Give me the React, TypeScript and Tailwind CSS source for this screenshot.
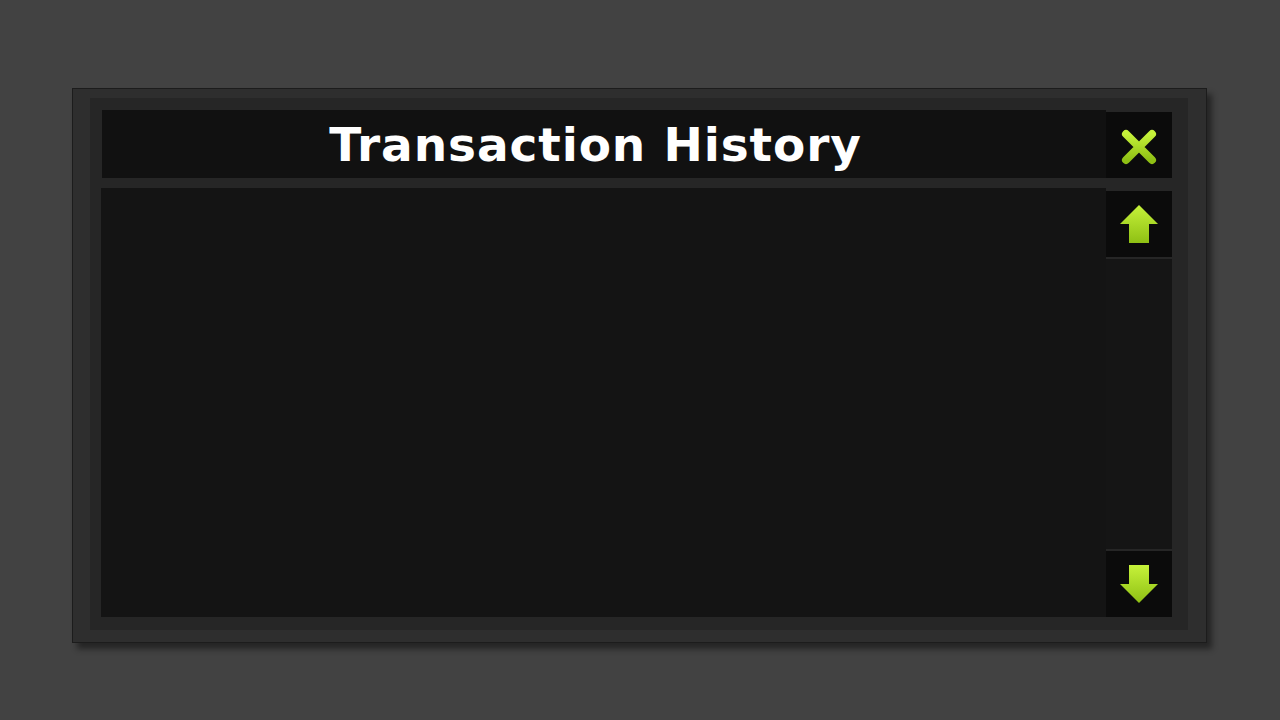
import React from "react";

const G = ({ id }: { id: string }) => (
  <defs>
    <linearGradient id={id} x1="0" y1="0" x2="0" y2="1">
      <stop offset="0" stopColor="#c6f23a" />
      <stop offset="1" stopColor="#8fc014" />
    </linearGradient>
  </defs>
);

export default function App() {
  return (
    <div className="w-[1280px] h-[720px] bg-[#424242] pt-[88px] pl-[72px] overflow-hidden" style={{ fontFamily: '"DejaVu Sans", Verdana, sans-serif' }}>
      <div className="w-[1135px] h-[555px] bg-[#2e2e2e] border border-[#1c1c1c] shadow-[5px_6px_6px_rgba(0,0,0,0.45)] pt-[9px] pl-[17px] pr-[18px] pb-[12px] flex">
        <div className="flex-1 bg-[#262626] pt-[12px] pl-[11px] pr-[16px] pb-[13px] flex">
          <div className="flex-1 flex flex-col">
            <div className="h-[68px] bg-[#111111] flex items-center justify-center ml-[1px] pr-[17px]">
              <span className="text-white font-bold text-[47px] leading-none tracking-[0.9px]">Transaction History</span>
            </div>
            <div className="flex-1 mt-[10px] bg-[#141414]" />
          </div>
          <div className="w-[66px] flex flex-col">
            <div className="h-[66px] mt-[2px] bg-[#0b0b0b] flex items-center justify-center">
              <svg width="36" height="36" viewBox="0 0 36 36" className="mt-[3px]">
                <G id="gx" />
                <path d="M5 5 L31 31 M31 5 L5 31" stroke="url(#gx)" strokeWidth="8" strokeLinecap="round" fill="none" />
              </svg>
            </div>
            <div className="h-[66px] mt-[13px] bg-[#0b0b0b] flex items-center justify-center">
              <svg width="40" height="40" viewBox="0 0 40 40">
                <G id="gu" />
                <path d="M20 1 L39 20 L30 20 L30 39 L10 39 L10 20 L1 20 Z" fill="url(#gu)" />
              </svg>
            </div>
            <div className="flex-1 mt-[2px] bg-[#151515]" />
            <div className="h-[66px] mt-[2px] bg-[#0b0b0b] flex items-center justify-center">
              <svg width="40" height="40" viewBox="0 0 40 40">
                <G id="gd" />
                <path d="M10 1 L30 1 L30 20 L39 20 L20 39 L1 20 L10 20 Z" fill="url(#gd)" />
              </svg>
            </div>
          </div>
        </div>
      </div>
    </div>
  );
}
